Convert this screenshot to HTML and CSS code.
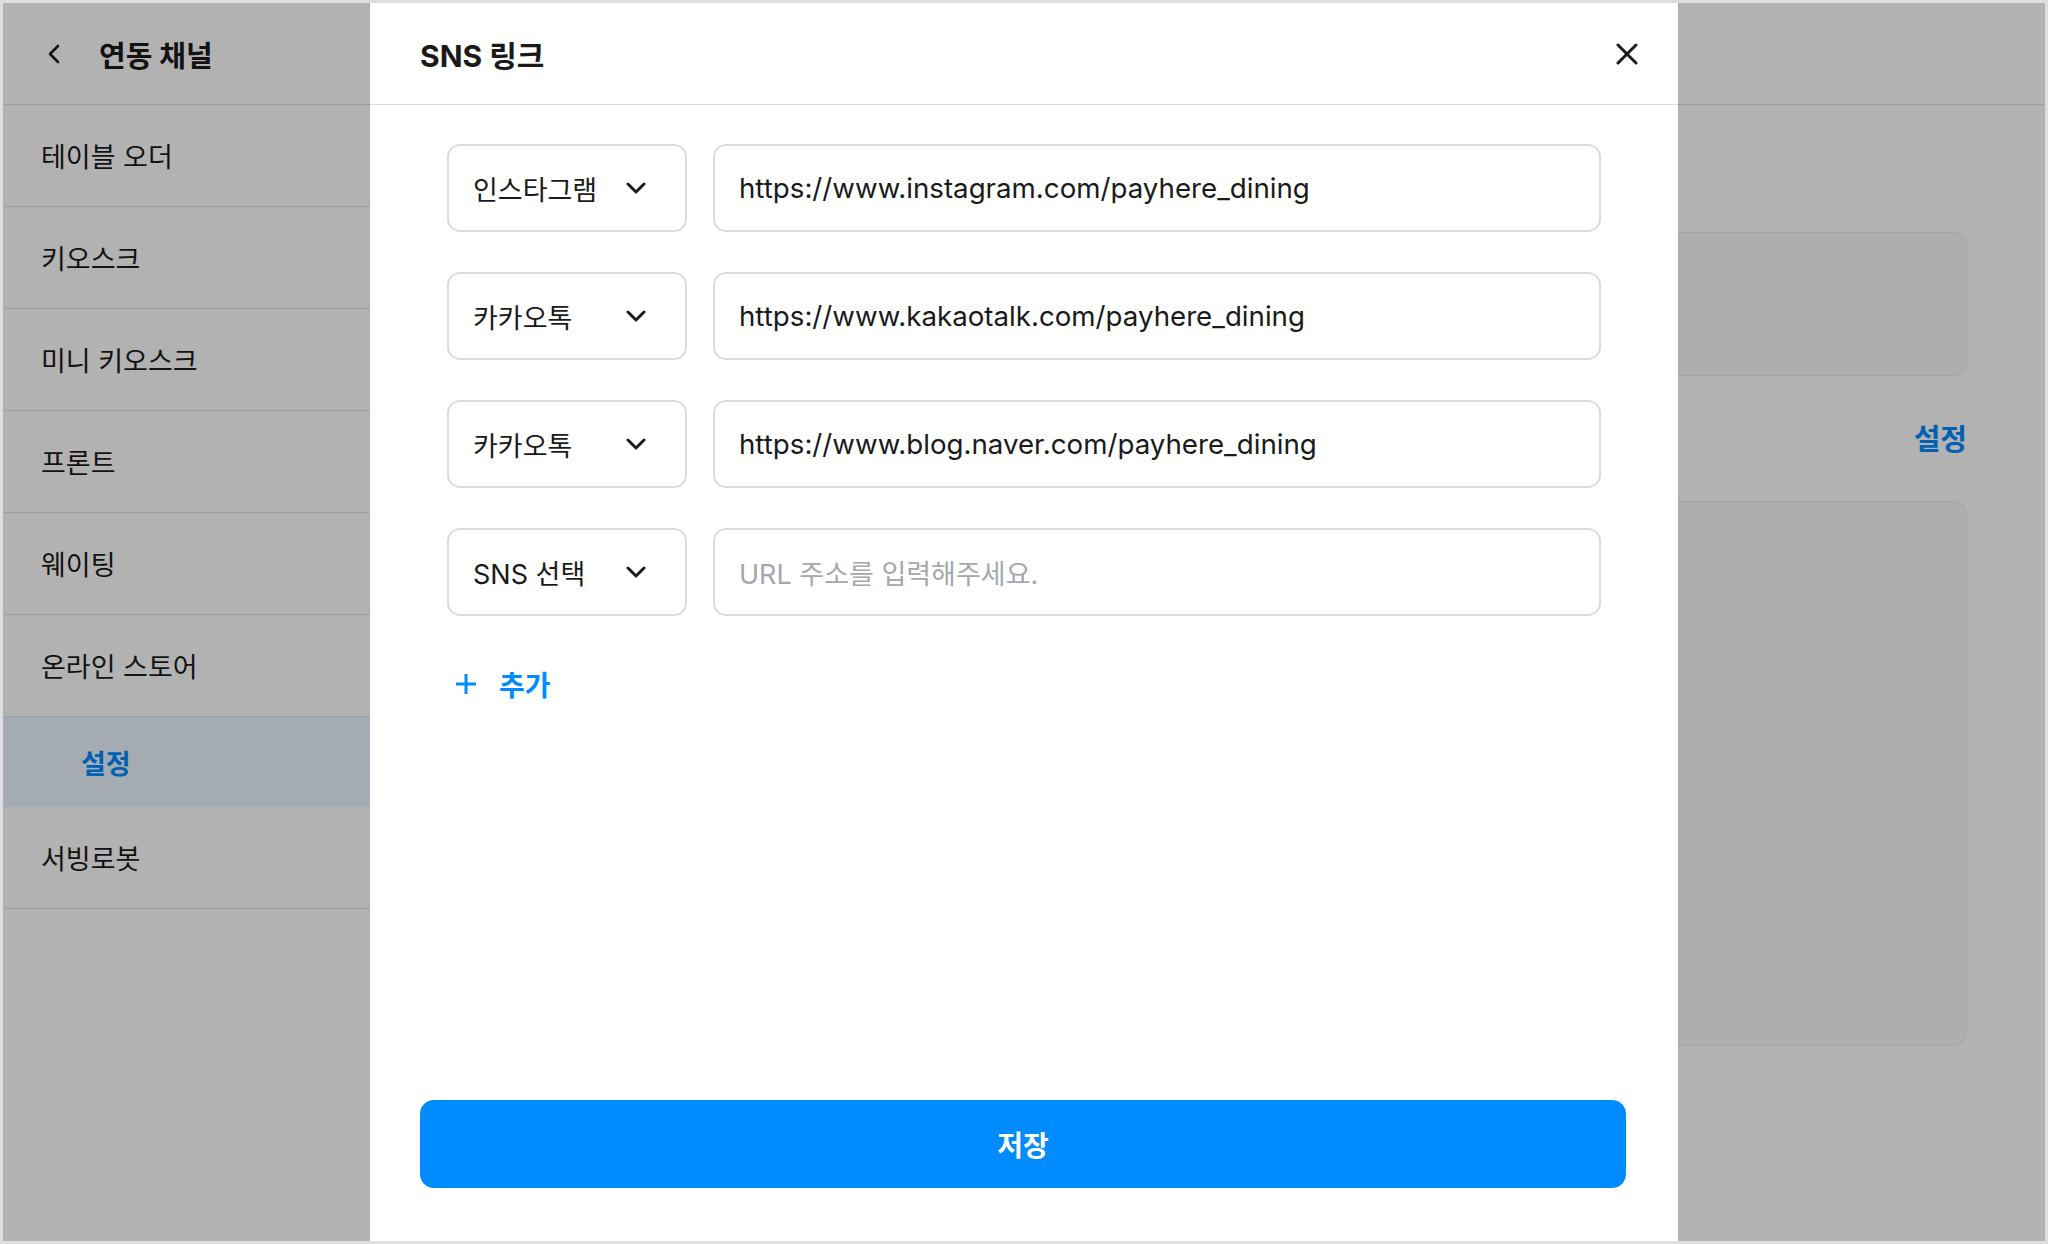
FILE: index.html
```html
<!DOCTYPE html>
<html lang="ko">
<head>
    <meta charset="UTF-8">
    <meta name="viewport" content="width=device-width, initial-scale=1.0">
    <title>SNS 링크</title>
    <link rel="stylesheet" href="styles.css">
</head>
<body>
    <div class="screen">
        <aside class="sidebar">
            <div class="side-header">
                <svg class="back" width="14" height="20" viewBox="0 0 14 20"><polyline points="11,2 3,10 11,18" fill="none" stroke="#1a1a1a" stroke-width="2.6" stroke-linecap="round" stroke-linejoin="round"/></svg>
                <h1>연동 채널</h1>
            </div>
            <ul class="menu">
                <li>테이블 오더</li>
                <li>키오스크</li>
                <li>미니 키오스크</li>
                <li>프론트</li>
                <li>웨이팅</li>
                <li>온라인 스토어</li>
                <li class="sub active">설정</li>
                <li>서빙로봇</li>
            </ul>
        </aside>
        <main class="content">
            <div class="content-header"></div>
            <div class="content-body">
                <div class="card card-top"></div>
                <div class="link-row"><span class="link">설정</span></div>
                <div class="card card-main"></div>
            </div>
        </main>
        <div class="dim"></div>
        <section class="modal">
            <div class="modal-header">
                <h2>SNS 링크</h2>
                <svg class="close" width="22" height="22" viewBox="0 0 22 22"><path d="M2 2 L20 20 M20 2 L2 20" stroke="#1a1a1a" stroke-width="3" stroke-linecap="round"/></svg>
            </div>
            <div class="modal-body">
                <div class="sns-list">
                    <div class="sns-row">
                        <div class="select">인스타그램<svg class="caret" width="22" height="14" viewBox="0 0 22 14"><polyline points="3,3 11,11 19,3" fill="none" stroke="#1a1a1a" stroke-width="3" stroke-linecap="round" stroke-linejoin="round"/></svg></div>
                        <div class="field">https://www.instagram.com/payhere_dining</div>
                    </div>
                    <div class="sns-row">
                        <div class="select">카카오톡<svg class="caret" width="22" height="14" viewBox="0 0 22 14"><polyline points="3,3 11,11 19,3" fill="none" stroke="#1a1a1a" stroke-width="3" stroke-linecap="round" stroke-linejoin="round"/></svg></div>
                        <div class="field">https://www.kakaotalk.com/payhere_dining</div>
                    </div>
                    <div class="sns-row">
                        <div class="select">카카오톡<svg class="caret" width="22" height="14" viewBox="0 0 22 14"><polyline points="3,3 11,11 19,3" fill="none" stroke="#1a1a1a" stroke-width="3" stroke-linecap="round" stroke-linejoin="round"/></svg></div>
                        <div class="field">https://www.blog.naver.com/payhere_dining</div>
                    </div>
                    <div class="sns-row">
                        <div class="select">SNS 선택<svg class="caret" width="22" height="14" viewBox="0 0 22 14"><polyline points="3,3 11,11 19,3" fill="none" stroke="#1a1a1a" stroke-width="3" stroke-linecap="round" stroke-linejoin="round"/></svg></div>
                        <div class="field placeholder">URL 주소를 입력해주세요.</div>
                    </div>
                </div>
                <div class="add">
                    <svg width="22" height="22" viewBox="0 0 22 22"><path d="M11 1 V21 M1 11 H21" stroke="#008cff" stroke-width="3"/></svg>
                    <span>추가</span>
                </div>
            </div>
            <div class="modal-footer">
                <button class="save">저장</button>
            </div>
        </section>
    </div>
</body>
</html>
```

FILE: styles.css
```css
body {
    margin: 0;
    padding: 0;
    font-family: "Inter", "Noto Sans CJK KR", sans-serif;
    color: #1a1a1a;
}
.screen {
    position: relative;
    display: flex;
    width: 2048px;
    height: 1244px;
    box-sizing: border-box;
    border: 3px solid #dedede;
    background-color: #fff;
    overflow: hidden;
}
.sidebar {
    width: 367px;
    flex-shrink: 0;
}
.side-header {
    height: 101px;
    display: flex;
    align-items: center;
    padding-left: 44px;
    border-bottom: 1px solid #e2e2e2;
}
.side-header h1 {
    margin: 0 0 0 38px;
    font-size: 29px;
    font-weight: 700;
}
.menu {
    list-style: none;
    margin: 0;
    padding: 0;
}
.menu li {
    height: 102px;
    box-sizing: border-box;
    display: flex;
    align-items: center;
    padding-left: 38px;
    font-size: 27px;
    border-bottom: 1px solid #e2e2e2;
}
.menu li.sub {
    height: 90px;
    padding-left: 78px;
    border-bottom: none;
}
.menu li.active {
    background-color: #ebf5ff;
    color: #008cff;
    font-weight: 700;
}
.content {
    flex: 1;
}
.content-header {
    height: 101px;
    border-bottom: 1px solid #e2e2e2;
}
.content-body {
    padding: 127px 78px 0 40px;
}
.card {
    background-color: #fafafa;
    border: 1px solid #ebebeb;
    border-radius: 14px;
}
.card-top {
    height: 142px;
}
.card-main {
    height: 543px;
}
.link-row {
    height: 122px;
    padding-bottom: 3px;
    display: flex;
    align-items: center;
    justify-content: flex-end;
}
.link {
    color: #008cff;
    font-size: 29px;
    font-weight: 700;
}
.dim {
    position: absolute;
    inset: 0;
    background-color: rgba(0, 0, 0, 0.3);
}
.modal {
    position: absolute;
    top: 0;
    bottom: 0;
    left: 367px;
    width: 1308px;
    background-color: #fff;
    display: flex;
    flex-direction: column;
}
.modal-header {
    height: 101px;
    flex-shrink: 0;
    display: flex;
    align-items: center;
    justify-content: space-between;
    padding: 0 40px 0 50px;
    border-bottom: 1px solid #d8d8d8;
}
.modal-header h2 {
    margin: 0;
    font-size: 30px;
    font-weight: 700;
}
.modal-body {
    flex: 1;
    padding: 39px 77px 0;
}
.sns-list {
    display: flex;
    flex-direction: column;
    gap: 40px;
}
.sns-row {
    display: flex;
    gap: 26px;
}
.select, .field {
    height: 88px;
    box-sizing: border-box;
    border: 2px solid #dcdcdc;
    border-radius: 13px;
    display: flex;
    align-items: center;
    font-size: 27px;
}
.select {
    width: 240px;
    justify-content: space-between;
    padding: 0 38px 0 24px;
}
.field {
    flex: 1;
    padding: 0 24px;
    font-size: 27.7px;
}
.field.placeholder {
    color: #a3a7ae;
    font-size: 27px;
}
.add {
    display: flex;
    align-items: center;
    gap: 22px;
    height: 40px;
    margin-top: 48px;
    padding-left: 8px;
    color: #008cff;
    font-size: 28px;
    font-weight: 600;
}
.modal-footer {
    padding: 0 52px 53px 50px;
}
.save {
    width: 100%;
    height: 88px;
    border: none;
    border-radius: 14px;
    background-color: #008cff;
    color: #fff;
    font-family: inherit;
    font-size: 28px;
    font-weight: 600;
}
```
